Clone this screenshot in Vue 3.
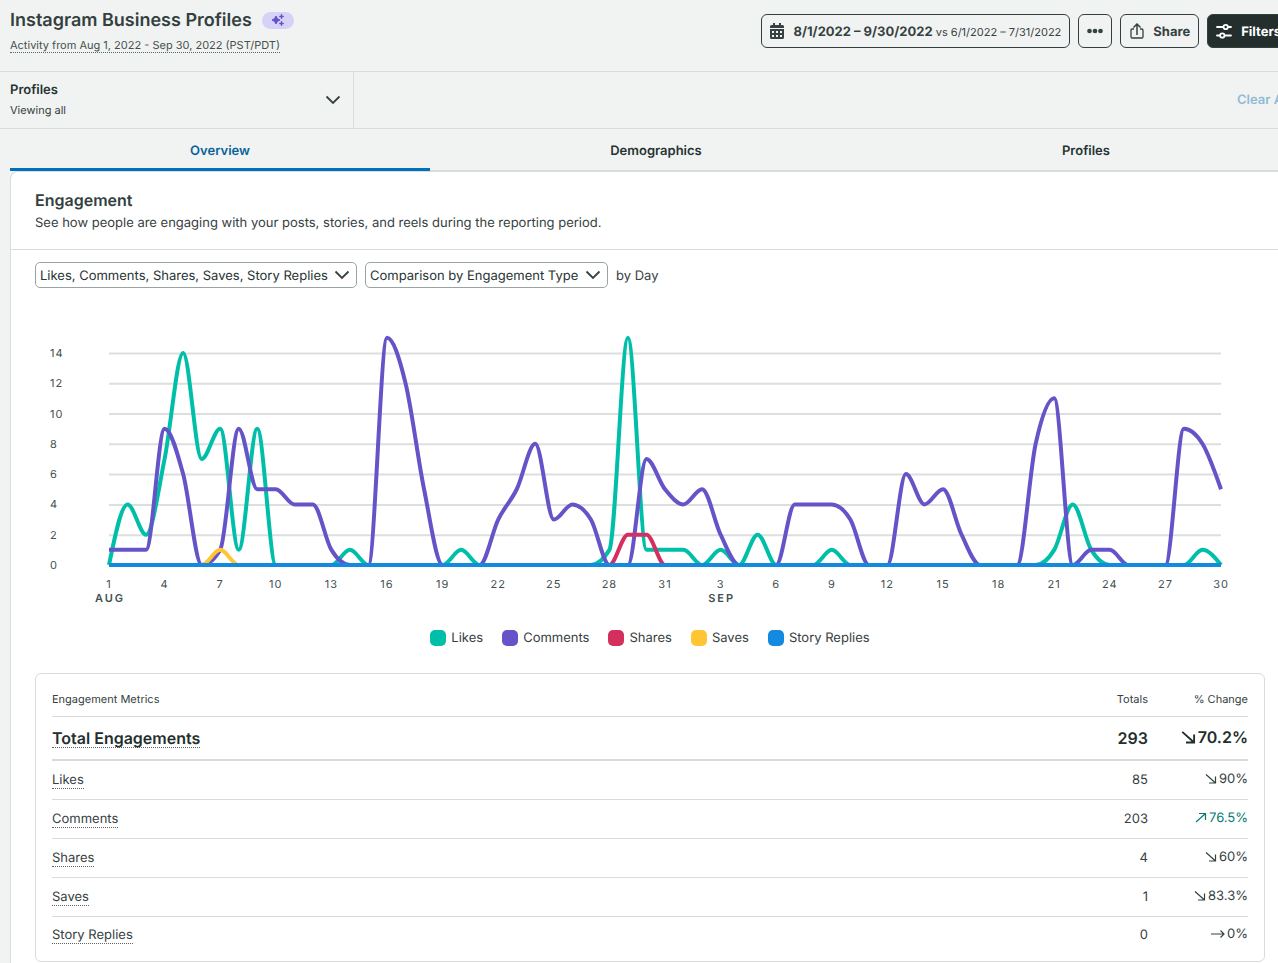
<script setup>
const series = [
  {
    name: 'Likes',
    color: '#00bfa9',
    values: [
      0, 4, 2, 7, 14, 7, 9, 1, 9, 0, 0, 0, 0, 1, 0, 0, 0, 0, 0, 1, 0, 0, 0, 0, 0, 0, 0, 1, 15, 1, 1,
      1, 0, 1, 0, 2, 0, 0, 0, 1, 0, 0, 0, 0, 0, 0, 0, 0, 0, 0, 0, 1, 4, 1, 0, 0, 0, 0, 0, 1, 0
    ]
  },
  {
    name: 'Comments',
    color: '#6554c7',
    values: [
      1, 1, 1, 9, 6, 0, 1, 9, 5, 5, 4, 4, 1, 0, 0, 15, 12, 5, 0, 0, 0, 3, 5, 8, 3, 4, 3, 0, 0, 7, 5,
      4, 5, 2, 0, 0, 0, 4, 4, 4, 3, 0, 0, 6, 4, 5, 2, 0, 0, 0, 8, 11, 0, 1, 1, 0, 0, 0, 9, 8, 5
    ]
  },
  { name: 'Shares', color: '#d4305f', values: Array.from({ length: 61 }, (_, i) => (i === 28 || i === 29 ? 2 : 0)) },
  { name: 'Saves', color: '#ffc533', values: Array.from({ length: 61 }, (_, i) => (i === 6 ? 1 : 0)) },
  { name: 'Story Replies', color: '#138ae0', values: Array(61).fill(0) }
]

const plot = { left: 74, right: 1186, base: 245, unit: 15.15 }
const px = (i) => plot.left + (i * (plot.right - plot.left)) / 60
const py = (v) => plot.base - v * plot.unit

// Monotone cubic interpolation: the curve never overshoots its points.
function linePath(values) {
  const step = px(1) - px(0)
  const ys = values.map(py)
  const last = ys.length - 1
  const slopes = ys.slice(1).map((y, i) => (y - ys[i]) / step)
  const tangents = ys.map((_, i) => {
    if (i === 0 || i === last) return 0
    const a = slopes[i - 1]
    const b = slopes[i]
    return (Math.sign(a) + Math.sign(b)) * Math.min(Math.abs(a), Math.abs(b), 0.25 * Math.abs(a + b))
  })
  tangents[0] = (3 * slopes[0] - tangents[1]) / 2
  tangents[last] = (3 * slopes[last - 1] - tangents[last - 1]) / 2
  let d = `M${px(0)},${ys[0]}`
  for (let i = 0; i < last; i++) {
    const third = step / 3
    d += `C${px(i) + third},${ys[i] + tangents[i] * third} ${px(i + 1) - third},${ys[i + 1] - tangents[i + 1] * third} ${px(i + 1)},${ys[i + 1]}`
  }
  return d
}

const lines = series.map((s) => ({ name: s.name, color: s.color, d: linePath(s.values) }))
const yTicks = [14, 12, 10, 8, 6, 4, 2, 0]
const xTicks = Array.from({ length: 21 }, (_, k) => {
  const i = k * 3
  return { i, day: i < 31 ? i + 1 : i - 30, month: i === 0 ? 'AUG' : i === 33 ? 'SEP' : '' }
})

const rows = [
  { name: 'Likes', total: 85, change: '90%', dir: 'down' },
  { name: 'Comments', total: 203, change: '76.5%', dir: 'up' },
  { name: 'Shares', total: 4, change: '60%', dir: 'down' },
  { name: 'Saves', total: 1, change: '83.3%', dir: 'down' },
  { name: 'Story Replies', total: 0, change: '0%', dir: 'flat' }
]
const arrows = {
  down: 'M1 1.500L10.500 10M10.500 3.500V10H4',
  up: 'M1 10L10.500 1.500M4 1.500H10.500V8',
  flat: 'M0 6H13M9.500 2.500L13 6L9.500 9.500'
}
</script>

<template>
  <div class="viewport">
    <div class="page">
      <header class="top">
        <div>
          <div class="title-row">
            <h1>Instagram Business Profiles</h1>
            <span class="ai-badge">
              <svg width="14" height="12" viewBox="0 0 14 12" aria-hidden="true">
                <path d="M5 2Q5.800 5.200 9 6Q5.800 6.800 5 10Q4.200 6.800 1 6Q4.200 5.200 5 2Z" stroke="currentColor" stroke-linejoin="round" fill="currentColor" />
                <path d="M10.500 0.800V4.200M8.800 2.500H12.200M10.500 7.800V11.200M8.800 9.500H12.200" stroke="currentColor" stroke-width="1.400" stroke-linecap="round" />
              </svg>
            </span>
          </div>
          <span class="activity dotted">Activity from Aug 1, 2022 - Sep 30, 2022 (PST/PDT)</span>
        </div>
        <div class="actions">
          <button type="button" class="btn date">
            <svg width="14" height="16" viewBox="0 0 14 16" aria-hidden="true">
              <path fill="currentColor" fill-rule="evenodd" d="M3 0H5V2H9V0H11V2H12.500A1.500 1.500 0 0 1 14 3.500V5H0V3.500A1.500 1.500 0 0 1 1.500 2H3ZM0 6H14V14.500A1.500 1.500 0 0 1 12.500 16H1.500A1.500 1.500 0 0 1 0 14.500ZM2 8V10H4V8ZM6 8V10H8V8ZM10 8V10H12V8ZM2 12V14H4V12ZM6 12V14H8V12ZM10 12V14H12V12Z" />
            </svg>
            <span><strong>8/1/2022 – 9/30/2022</strong> <small>vs 6/1/2022 – 7/31/2022</small></span>
          </button>
          <button type="button" class="btn more" aria-label="More options">
            <svg width="16" height="6" viewBox="0 0 16 6" aria-hidden="true">
              <g fill="currentColor"><circle cx="2.500" cy="3" r="2.350" /><circle cx="8" cy="3" r="2.350" /><circle cx="13.500" cy="3" r="2.350" /></g>
            </svg>
          </button>
          <button type="button" class="btn share">
            <svg width="14" height="16" viewBox="0 0 14 16" fill="none" stroke="currentColor" aria-hidden="true">
              <path stroke-width="1.300" d="M4 6H2.200Q1 6 1 7.200V13.800Q1 15 2.200 15H11.800Q13 15 13 13.800V7.200Q13 6 11.800 6H10" />
              <path stroke-width="1.500" d="M7 12V1.500M3.500 4.500L7 1L10.500 4.500" />
            </svg>
            <span>Share</span>
          </button>
          <button type="button" class="btn filters">
            <svg width="16" height="16" viewBox="0 0 16 16" fill="none" stroke="currentColor" stroke-width="1.800" stroke-linecap="round" aria-hidden="true">
              <path d="M1 4H7M12 4H15M1 12.500H4M9 12.500H15" />
              <circle cx="9.700" cy="4" r="2.200" /><circle cx="6.300" cy="12.500" r="2.200" />
            </svg>
            <span>Filters</span>
          </button>
        </div>
      </header>

      <div class="filter-bar">
        <button type="button" class="profile-filter">
          <span class="filter-text"><strong>Profiles</strong><span>Viewing all</span></span>
          <svg width="16" height="10" viewBox="0 0 16 10" fill="none" stroke="currentColor" stroke-width="1.800" aria-hidden="true"><path d="M1.500 1.500L8 8L14.500 1.500" /></svg>
        </button>
        <button type="button" class="clear" disabled>Clear All</button>
      </div>

      <nav class="tabs">
        <button type="button" class="active">Overview</button>
        <button type="button">Demographics</button>
        <button type="button">Profiles</button>
      </nav>

      <main class="panel">
        <div class="panel-head">
          <h2>Engagement</h2>
          <p>See how people are engaging with your posts, stories, and reels during the reporting period.</p>
        </div>
        <div class="panel-body">
          <div class="controls">
            <span class="picker">
              <select aria-label="Metrics"><option>Likes, Comments, Shares, Saves, Story Replies</option></select>
              <svg width="16" height="10" viewBox="0 0 16 10" fill="none" stroke="currentColor" stroke-width="1.800" aria-hidden="true"><path d="M1.500 1.500L8 8L14.500 1.500" /></svg>
            </span>
            <span class="picker">
              <select aria-label="Comparison"><option>Comparison by Engagement Type</option></select>
              <svg width="16" height="10" viewBox="0 0 16 10" fill="none" stroke="currentColor" stroke-width="1.800" aria-hidden="true"><path d="M1.500 1.500L8 8L14.500 1.500" /></svg>
            </span>
            <span class="by-day">by Day</span>
          </div>

          <svg class="chart" viewBox="0 0 1230 290" role="img" aria-label="Engagement by day">
            <g v-for="t in yTicks" :key="t">
              <line class="grid" :x1="plot.left" :x2="plot.right" :y1="py(t) + 0.5" :y2="py(t) + 0.5" />
              <text class="tick" x="15" :y="py(t) + 4">{{ t }}</text>
            </g>
            <path v-for="l in lines" :key="l.name" class="line" :d="l.d" :stroke="l.color" />
            <g v-for="t in xTicks" :key="t.i" text-anchor="middle">
              <text class="tick" :x="px(t.i)" y="268">{{ t.day }}</text>
              <text v-if="t.month" class="month" :x="px(t.i) + 1" y="282">{{ t.month }}</text>
            </g>
          </svg>

          <ul class="legend">
            <li v-for="s in series" :key="s.name">
              <i :style="{ background: s.color }"></i>{{ s.name }}
            </li>
          </ul>

          <div class="table-box">
            <table>
              <thead>
                <tr><th>Engagement Metrics</th><th class="num">Totals</th><th class="num change">% Change</th></tr>
              </thead>
              <tbody>
                <tr class="total">
                  <td><span class="dotted">Total Engagements</span></td>
                  <td class="num">293</td>
                  <td class="num">
                    <span class="delta"><svg width="15" height="15" viewBox="0 0 12 12" aria-hidden="true"><path :d="arrows.down" /></svg>70.2%</span>
                  </td>
                </tr>
                <tr v-for="r in rows" :key="r.name">
                  <td><span class="dotted">{{ r.name }}</span></td>
                  <td class="num">{{ r.total }}</td>
                  <td class="num">
                    <span class="delta" :class="r.dir"><svg :width="r.dir === 'flat' ? 14 : 12" height="12" :viewBox="r.dir === 'flat' ? '0 0 14 12' : '0 0 12 12'" aria-hidden="true"><path :d="arrows[r.dir]" /></svg>{{ r.change }}</span>
                  </td>
                </tr>
              </tbody>
            </table>
          </div>
        </div>
      </main>
    </div>
  </div>
</template>

<style>
html,
body {
  background: #f1f3f2;
}
</style>

<style scoped>
* {
  box-sizing: border-box;
}
.viewport {
  overflow: hidden;
  min-height: 100vh;
  display: flow-root;
}
.page {
  margin-right: -22px;
  font-family: Inter, 'Liberation Sans', sans-serif;
  font-size: 13px;
  line-height: 20px;
  text-rendering: geometricPrecision;
  color: #364141;
}
h1,
h2,
p,
ul {
  margin: 0;
  padding: 0;
}
button,
select {
  font: inherit;
  color: inherit;
  text-rendering: inherit;
  margin: 0;
}
button {
  background: none;
  border: 0;
  padding: 0;
  white-space: nowrap;
}
.top {
  display: flex;
  justify-content: space-between;
  height: 72px;
  padding: 8px 10px 0;
  border-bottom: 1px solid #d8dcdb;
}
.title-row {
  display: flex;
  align-items: center;
  gap: 10px;
  height: 24px;
}
h1 {
  padding-top: 2px;
  font-size: 18px;
  line-height: 24px;
  font-weight: 600;
  color: #33403f;
}
.ai-badge {
  display: flex;
  align-items: center;
  justify-content: center;
  width: 32px;
  height: 17px;
  border-radius: 9px;
  background: #d6d2f7;
  color: #6450c8;
}
.dotted {
  border-bottom: 1px dotted #5a6666;
}
.activity {
  display: inline-block;
  font-size: 11px;
  line-height: 14px;
  margin-top: 6px;
  color: #44504f;
}
.actions {
  display: flex;
  gap: 8px;
  padding-top: 6px;
}
.btn {
  display: flex;
  align-items: center;
  justify-content: center;
  gap: 9px;
  height: 34px;
  padding: 0 8px;
  border: 1px solid #33403f;
  border-radius: 6px;
  font-weight: 700;
}
.btn span {
  padding-top: 2px;
}
.btn strong {
  font-weight: 700;
}
.btn small {
  font-size: 11px;
  font-weight: 400;
}
.more {
  width: 34px;
}
.share {
  padding-left: 9px;
}
.filters {
  background: #232e2d;
  color: #fff;
}
.filter-bar {
  display: flex;
  align-items: center;
  justify-content: space-between;
  height: 57px;
  padding-right: 10px;
  border-bottom: 1px solid #d8dcdb;
}
.profile-filter {
  display: flex;
  align-items: center;
  justify-content: space-between;
  width: 354px;
  height: 56px;
  padding: 0 12px 0 10px;
  border-right: 1px solid #d8dcdb;
  text-align: left;
}
.filter-text {
  display: flex;
  flex-direction: column;
  font-size: 11px;
}
.filter-text strong {
  font-size: 13px;
  font-weight: 600;
  color: #273333;
}
.clear {
  font-weight: 600;
  color: #92bad5;
}
.tabs {
  display: flex;
  height: 42px;
  margin: 0 10px;
}
.tabs button {
  flex: 1 1 auto;
  padding-top: 2px;
  font-weight: 600;
  color: #273333;
  box-shadow: inset 0 -1px #d8dcdb;
}
.tabs .active {
  color: #0a629b;
  box-shadow: inset 0 -3px #0070bd;
}
.panel {
  margin: 0 10px;
  background: #fff;
  border: 1px solid #d8dcdb;
  border-bottom: 0;
  border-radius: 8px 8px 0 0;
}
.panel-head {
  padding: 16px 24px 15px;
  border-bottom: 1px solid #d8dcdb;
}
.panel-head p {
  line-height: 22px;
}
h2 {
  font-size: 16px;
  line-height: 24px;
  font-weight: 600;
  color: #33403f;
}
.panel-body {
  padding: 12px 24px 1px;
}
.controls {
  display: flex;
  align-items: center;
  gap: 8px;
}
.picker {
  position: relative;
  display: flex;
}
.picker select {
  appearance: none;
  height: 26px;
  padding: 2px 28px 0 4px;
  border: 1px solid #98a3a2;
  border-radius: 5px;
  background: #fff;
  color: #273333;
}
.picker svg {
  position: absolute;
  right: 7px;
  top: 8px;
  pointer-events: none;
}
.by-day {
  padding-top: 2px;
}
.chart {
  display: block;
  width: 100%;
  height: auto;
  margin-top: 32px;
}
.grid {
  stroke: #dcdfdf;
  stroke-width: 2;
}
.line {
  fill: none;
  stroke-width: 4;
}
.tick,
.month {
  font-size: 11px;
  letter-spacing: 1px;
  fill: #44504f;
}
.month {
  font-weight: 600;
  letter-spacing: 2px;
}
.legend {
  display: flex;
  justify-content: center;
  gap: 19px;
  margin: 18px 0 25px;
  list-style: none;
}
.legend li {
  display: flex;
  align-items: center;
  gap: 5px;
}
.legend i {
  width: 16px;
  height: 16px;
  border-radius: 5px;
}
.table-box {
  padding: 8px 16px;
  border: 1px solid #d8dcdb;
  border-radius: 6px;
}
table {
  width: 100%;
  border-collapse: separate;
  border-spacing: 0;
}
th,
td {
  height: 39px;
  padding: 0;
  text-align: left;
  border-bottom: 1px solid #d8dcdb;
}
th {
  height: 35px;
  font-size: 11px;
  font-weight: 400;
}
tbody tr:last-child td {
  height: 36px;
  border-bottom: 0;
}
.total td {
  height: 44px;
  font-size: 16px;
  font-weight: 600;
  color: #232e2d;
  border-bottom: 2px solid #d8dcdb;
}
.num {
  text-align: right;
}
.change {
  width: 100px;
}
td .dotted {
  display: inline-block;
  line-height: 16px;
}
.total .dotted {
  line-height: 18px;
}
.delta {
  display: inline-flex;
  align-items: center;
  gap: 2px;
}
.delta svg {
  fill: none;
  stroke: currentColor;
  stroke-width: 1.2;
}
.total .delta svg {
  stroke-width: 1.5;
}
.delta.up {
  color: #067a75;
}
</style>
